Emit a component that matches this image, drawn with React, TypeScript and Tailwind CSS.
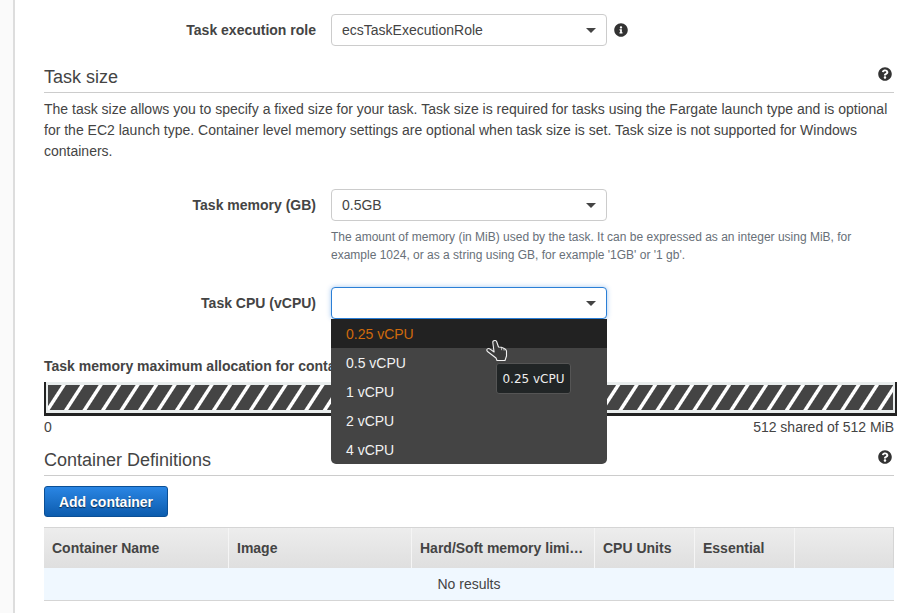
import React from "react";
import { FaInfoCircle, FaQuestionCircle } from "react-icons/fa";

function Caret() {
  return <span className="ml-auto w-0 h-0 border-l-[5px] border-r-[5px] border-t-[5px] border-l-transparent border-r-transparent border-t-[#444]" />;
}

function Field({ label, value, focus }: { label: string; value?: string; focus?: boolean }) {
  return (
    <div className="flex items-center">
      <div className="w-[272px] text-right font-bold text-[14px] text-[#444] pr-0">{label}</div>
      <div
        className={
          focus
            ? "ml-[15px] w-[276px] h-[32px] rounded-[4px] border border-[#2b7fd6] bg-white flex items-center pl-[10px] pr-[10px] shadow-[0_0_5px_rgba(50,130,220,0.45)]"
            : "ml-[15px] w-[276px] h-[32px] rounded-[4px] border border-[#ccc] bg-white flex items-center pl-[10px] pr-[10px]"
        }
      >
        <span className="text-[14px] text-[#444]">{value}</span>
        <Caret />
      </div>
    </div>
  );
}

function Heading({ children }: { children: React.ReactNode }) {
  return (
    <div className="flex items-center justify-between border-b border-[#ccc] h-[31px] pb-[1px]">
      <span className="text-[18px] text-[#444] leading-[24px]">{children}</span>
      <FaQuestionCircle className="text-[#333] w-[14px] h-[14px] mb-[5px] mr-[2px]" />
    </div>
  );
}

const items = ["0.25 vCPU", "0.5 vCPU", "1 vCPU", "2 vCPU", "4 vCPU"];
const columns: [string, string][] = [
  ["Container Name", "w-[185px] pl-[8px]"],
  ["Image", "w-[183px] pl-[8px]"],
  ["Hard/Soft memory limi…", "w-[183px] pl-[8px]"],
  ["CPU Units", "w-[100px] pl-[8px]"],
  ["Essential", "w-[100px] pl-[8px]"],
  ["", "flex-1"],
];

export default function App() {
  return (
    <div className="h-[613px] w-[915px] overflow-hidden bg-white flex font-['Liberation_Sans',sans-serif] text-[#444]">
      <div className="w-[15px] shrink-0 bg-[#fafafa] border-r-2 border-[#ddd]" />
      <main className="relative w-[850px] ml-[29px] pt-[14px]">
        <div className="flex items-center">
          <Field label="Task execution role" value="ecsTaskExecutionRole" />
          <FaInfoCircle className="ml-[7px] w-[14px] h-[14px] text-[#333]" />
        </div>

        <div className="mt-[16px]">
          <Heading>Task size</Heading>
        </div>
        <p className="mt-[6px] text-[14px] leading-[21px] text-[#444]">
          The task size allows you to specify a fixed size for your task. Task size is required for tasks using the Fargate launch type and is optional for the EC2 launch type. Container level memory settings are optional when task size is set. Task size is not supported for Windows containers.
        </p>

        <div className="mt-[27px]">
          <Field label="Task memory (GB)" value="0.5GB" />
        </div>
        <p className="ml-[287px] mt-[7px] w-[540px] text-[12px] leading-[18px] text-[#687078]">
          The amount of memory (in MiB) used by the task. It can be expressed as an integer using MiB, for example 1024, or as a string using GB, for example '1GB' or '1 gb'.
        </p>

        <div className="mt-[23px]">
          <Field label="Task CPU (vCPU)" focus />
        </div>

        <div className="mt-[38px] font-bold text-[14px] leading-[18px] text-[#444] whitespace-nowrap">
          Task memory maximum allocation for container memory reservation
        </div>
        <div className="mt-[7px] w-[853px] h-[34px] border-l-2 border-r-2 border-b-[3px] border-[#222] border-t-0 bg-[#e9eded] pt-[3px] pb-[3px] pl-[2px] pr-[2px]">
          <div className="h-full bg-[repeating-linear-gradient(123deg,#444_0,#444_11px,#fff_12px,#fff_14.5px,#444_15.5px)]" />
        </div>
        <div className="flex justify-between mt-[2px] text-[14px] leading-[18px]">
          <span>0</span>
          <span>512 shared of 512 MiB</span>
        </div>

        <div className="mt-[9px]">
          <Heading>Container Definitions</Heading>
        </div>

        <button className="block mt-[10px] w-[124px] h-[31px] pt-[1px] rounded-[3px] border border-[#0b4f95] bg-gradient-to-b from-[#2a86e4] to-[#0b5cae] text-white font-bold text-[14px] [text-shadow:0_1px_1px_rgba(0,0,0,0.6)]">
          Add container
        </button>

        <div className="mt-[10px] flex h-[41px] border-t border-r border-[#d5d5d5] bg-gradient-to-b from-[#ededed] to-[#dfdfdf]">
          {columns.map(([name, cls], i) => (
            <div
              key={i}
              className={`${cls} ${i < 5 ? "border-r border-[#f5f5f5] " : ""}flex items-center font-bold text-[14px] text-[#444] whitespace-nowrap`}
            >
              {name}
            </div>
          ))}
        </div>
        <div className="h-[33px] bg-[#f0f8ff] border-b border-[#d5d5d5] flex items-center justify-center text-[14px] text-[#444]">
          No results
        </div>

        <ul className="absolute left-[287px] top-[319px] w-[276px] h-[145px] rounded-b-[5px] bg-[#444] overflow-hidden">
          {items.map((t, i) => (
            <li
              key={t}
              className={
                i === 0
                  ? "h-[29px] pl-[15px] pt-[1px] flex items-center bg-[#222] text-[#cf6a0c] text-[14px]"
                  : "h-[29px] pl-[15px] pt-[1px] flex items-center text-[#f2f2f2] text-[14px]"
              }
            >
              {t}
            </li>
          ))}
        </ul>

        <div className="absolute left-[452px] top-[363px] w-[75px] h-[31px] rounded-[3px] border border-[#555] bg-[#212526] text-[#eee] text-[12px] flex items-center justify-center font-['DejaVu_Sans',sans-serif]">
          0.25 vCPU
        </div>

        <svg className="absolute left-[442px] top-[339px]" width="22" height="24" viewBox="0 0 22 24">
          <path
            d="M7.300 2c1.200-1 3-.5 3.400.8L12.500 8l2.800.3 2.400 1 2 1.200.8 1.500v5l-1.500 4.500h-8l-1-2.500-8.500-6.500c-1-.9-.9-2 0-2.600 1-.6 1.800-.4 2.600.2l4 2.900L6.800 3.500c-.1-.6.100-1.100.5-1.500z"
            fill="#3a3a3a"
            stroke="#f2f2f2"
            strokeWidth="1.100"
            strokeLinejoin="round"
          />
          <path d="M15.300 8.800l.4 2.400M17.800 9.800l.3 1.800" stroke="#f2f2f2" strokeWidth="0.700" fill="none" />
        </svg>
      </main>
    </div>
  );
}
